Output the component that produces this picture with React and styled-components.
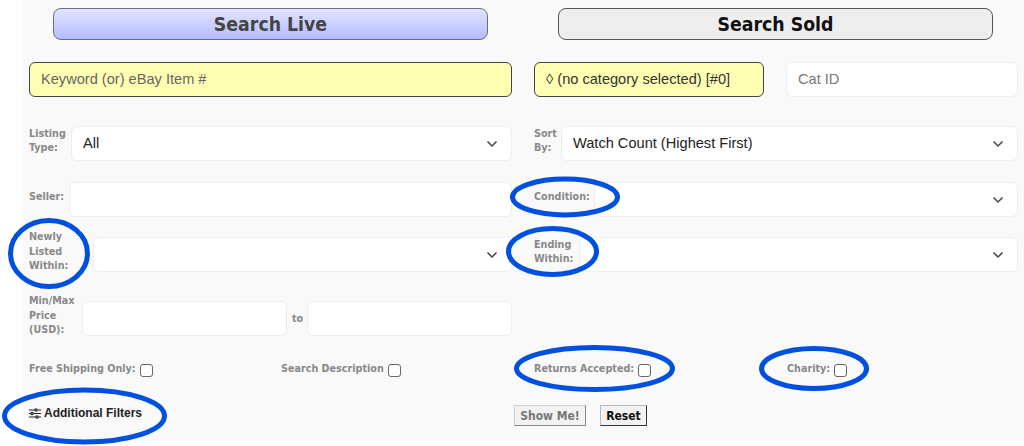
import React from "react";
import styled, { createGlobalStyle } from "styled-components";

const GlobalStyle = createGlobalStyle`
    html, body {
        margin: 0;
        background: #fff;
        overflow: hidden;
    }
`

const Page = styled.div`
    position: relative;
    width: 1024px;
    height: 446px;
    overflow: hidden;
`

const Panel = styled.form`
    margin-left: 23px;
    height: 442px;
    padding: 8px 6px 0;
    box-sizing: border-box;
    background: #f9f9f9;
    font-family: "Liberation Sans", Arial, sans-serif;
`

const Row = styled.div`
    display: grid;
    grid-template-columns: 483px 484px;
    column-gap: 22px;
    margin-top: ${({$top}) => $top || 0}px;
`

const Tab = styled.button`
    display: block;
    width: 435px;
    height: 32px;
    padding: 0;
    margin-left: 24px;
    box-sizing: border-box;
    border: 1px solid ${({$live}) => $live ? "#6c6c80" : "#555"};
    border-radius: 8px;
    background: ${({$live}) => $live ? "linear-gradient(#e4e4ff, #b3bcff)" : "#eeeeee"};
    color: ${({$live}) => $live ? "#444" : "#111"};
    font: bold 19.3px "DejaVu Sans Condensed", "DejaVu Sans", Verdana, sans-serif;
`

const Field = styled.div`
    display: flex;
    align-items: center;
    gap: ${({$gap}) => $gap || 0}px;
    height: 35px;
`

const Label = styled.label`
    flex: none;
    width: ${({$width}) => $width}px;
    padding-bottom: 5px;
    color: #888;
    font: bold 10.7px/14.5px "DejaVu Sans Condensed", "DejaVu Sans", Verdana, sans-serif;
`

const Input = styled.input`
    flex: ${({$width}) => $width ? "none" : 1};
    width: ${({$width}) => $width ? `${$width}px` : "auto"};
    min-width: 0;
    height: 35px;
    padding: 0 11px 2px;
    box-sizing: border-box;
    border: 1px solid ${({$hot}) => $hot ? "#444" : "#eceef3"};
    border-radius: 6px;
    background: ${({$hot}) => $hot ? "#ffffb3" : "#fff"};
    color: #333;
    font: 14.6px "Liberation Sans", Arial, sans-serif;
    outline: none;

    &::placeholder {
        color: ${({$hot}) => $hot ? "#666" : "#777"};
        opacity: 1;
    }
`

const CategoryBox = styled.div`
    display: flex;
    align-items: center;
    flex: none;
    width: 230px;
    height: 35px;
    padding: 0 11px 2px;
    box-sizing: border-box;
    border: 1px solid #444;
    border-radius: 6px;
    background: #ffffb3;
    color: #333;
    font-size: 14.6px;
`

const Select = styled.div`
    display: flex;
    flex: 1;
    align-items: center;
    justify-content: space-between;
    height: 35px;
    padding: 0 13px 2px 11px;
    box-sizing: border-box;
    border: 1px solid #eceef3;
    border-radius: 6px;
    background: #fff;
    color: #222;
    font-size: 14.6px;
`

const To = styled.span`
    flex: none;
    margin: 0 5px;
    width: 10px;
    color: #888;
    font: bold 10.7px "DejaVu Sans Condensed", "DejaVu Sans", Verdana, sans-serif;
`

const CheckRow = styled.div`
    display: grid;
    grid-template-columns: 252px 253px 253px 1fr;
    margin-top: 28px;
`

const CheckItem = styled.label`
    display: flex;
    align-items: center;
    gap: 4px;
    height: 13px;
    color: #888;
    font: bold 10.7px "DejaVu Sans Condensed", "DejaVu Sans", Verdana, sans-serif;
`

const CheckText = styled.span`
    padding-bottom: 4px;
`

const Check = styled.input.attrs({ type: "checkbox" })`
    appearance: none;
    width: 13px;
    height: 13px;
    margin: 0;
    background: #fff;
    border: 1px solid #666;
    border-radius: 3px;
`

const BottomRow = styled.div`
    display: flex;
    align-items: center;
    margin-top: 28px;
`

const FilterToggle = styled.div`
    display: flex;
    align-items: center;
    gap: 3px;
    width: 485px;
    padding-bottom: 5px;
    color: #222;
    font: bold 12px "Liberation Sans", Arial, sans-serif;
`

const Buttons = styled.div`
    display: flex;
    gap: 14px;
`

const SubmitButton = styled.button`
    height: 21px;
    padding: 0;
    width: ${({$width}) => $width}px;
    box-sizing: border-box;
    border: 1px solid;
    border-color: ${({$muted}) => $muted ? "#ccc #888 #888 #ccc" : "#bbb #333 #333 #bbb"};
    background: #f2f2f2;
    color: ${({$muted}) => $muted ? "#777" : "#111"};
    font: bold 12px "DejaVu Sans Condensed", "DejaVu Sans", Verdana, sans-serif;
`

const Marks = styled.svg`
    position: absolute;
    left: 0;
    top: 0;
    pointer-events: none;
`

const ChevronIcon = styled.svg`
    margin-top: 2px;
`

const Chevron = () => (
    <ChevronIcon width="12" height="8" viewBox="0 0 12 8" fill="none" stroke="#444" strokeWidth="1.5">
        <path d="M1.5 1.5 6 6l4.5-4.5" />
    </ChevronIcon>
)

const SlidersIcon = () => (
    <svg width="12" height="11" viewBox="0 0 12 11" fill="none" stroke="#222" strokeWidth="1.2">
        <path d="M0 2h5.5M8.5 2H12M0 5.5h1.5M4.5 5.5H12M0 9h6.5M9.5 9H12" />
        <circle cx="7" cy="2" r="1.2" />
        <circle cx="3" cy="5.5" r="1.2" />
        <circle cx="8" cy="9" r="1.2" />
    </svg>
)

const marks = [
    [49, 253.5, 38.5, 33],
    [565, 197, 52.5, 18],
    [552.5, 251.5, 44, 23],
    [594.5, 368.5, 78, 21],
    [814, 368.5, 52.5, 20],
    [84.5, 416, 80, 26],
]

const App = () => {
    return (
        <Page>
            <GlobalStyle />
            <Panel>
                <Row>
                    <Tab type="button" $live>Search Live</Tab>
                    <Tab type="button">Search Sold</Tab>
                </Row>
                <Row $top={22}>
                    <Input $hot placeholder="Keyword (or) eBay Item #" />
                    <Field $gap={22}>
                        <CategoryBox>◊ (no category selected) [#0]</CategoryBox>
                        <Input placeholder="Cat ID" />
                    </Field>
                </Row>
                <Row $top={29}>
                    <Field>
                        <Label $width={42}>Listing<br />Type:</Label>
                        <Select>All<Chevron /></Select>
                    </Field>
                    <Field>
                        <Label $width={27}>Sort<br />By:</Label>
                        <Select>Watch Count (Highest First)<Chevron /></Select>
                    </Field>
                </Row>
                <Row $top={21}>
                    <Field>
                        <Label $width={40}>Seller:</Label>
                        <Input />
                    </Field>
                    <Field>
                        <Label $width={60}>Condition:</Label>
                        <Select><span /><Chevron /></Select>
                    </Field>
                </Row>
                <Row $top={20}>
                    <Field>
                        <Label $width={64}>Newly<br />Listed<br />Within:</Label>
                        <Select><span /><Chevron /></Select>
                    </Field>
                    <Field>
                        <Label $width={45}>Ending<br />Within:</Label>
                        <Select><span /><Chevron /></Select>
                    </Field>
                </Row>
                <Row $top={29}>
                    <Field>
                        <Label $width={53}>Min/Max<br />Price<br />(USD):</Label>
                        <Input $width={205} />
                        <To>to</To>
                        <Input $width={205} />
                    </Field>
                </Row>
                <CheckRow>
                    <CheckItem><CheckText>Free Shipping Only:</CheckText><Check /></CheckItem>
                    <CheckItem><CheckText>Search Description</CheckText><Check /></CheckItem>
                    <CheckItem><CheckText>Returns Accepted:</CheckText><Check /></CheckItem>
                    <CheckItem><CheckText>Charity:</CheckText><Check /></CheckItem>
                </CheckRow>
                <BottomRow>
                    <FilterToggle><SlidersIcon />Additional Filters</FilterToggle>
                    <Buttons>
                        <SubmitButton type="button" $muted $width={72}>Show Me!</SubmitButton>
                        <SubmitButton type="button" $width={47}>Reset</SubmitButton>
                    </Buttons>
                </BottomRow>
            </Panel>
            <Marks width="1024" height="446" viewBox="0 0 1024 446" fill="none" stroke="#0050e0" strokeWidth="5">
                {marks.map(([cx, cy, rx, ry]) => (
                    <ellipse key={`${cx}-${cy}`} cx={cx} cy={cy} rx={rx} ry={ry} />
                ))}
            </Marks>
        </Page>
    );
}

export default App;
